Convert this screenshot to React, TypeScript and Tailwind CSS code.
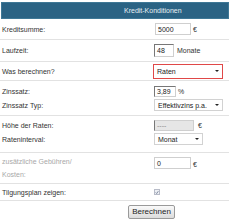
import React from "react";

function Field({
  w,
  value,
  bg = "bg-white text-[#222]",
  className = "",
}: {
  w: string;
  value: string;
  bg?: string;
  className?: string;
}) {
  return (
    <div className={`${w} ${bg} flex items-center border border-[#cfcfcf] pl-[2px] ${className}`}>
      {value}
    </div>
  );
}

function Select({ w, h, value, red = false }: { w: string; h: string; value: string; red?: boolean }) {
  return (
    <div
      className={`${w} ${h} flex items-center justify-between bg-white pl-[3px] pr-[3px] text-[#222] border ${
        red ? "border-[#e04848]" : "border-[#d2d2d2]"
      }`}
    >
      <span>{value}</span>
      <span className="h-0 w-0 border-l-[2px] border-r-[2px] border-t-[2px] border-l-transparent border-r-transparent border-t-[#222]" />
    </div>
  );
}

export default function App() {
  return (
    <div className="h-[220px] w-[229px] overflow-hidden bg-white text-[7px] leading-none text-[#333] [font-family:'Liberation_Sans',Arial,sans-serif]">
      {/* header */}
      <div className="ml-[1px] mt-[2px] flex h-[17px] items-center border border-[#3f7896] bg-[#2b6384] pl-[122px] text-[#e6eef3]">
        Kredit-Konditionen
      </div>

      <div className="flex h-[21px] items-center border-b border-[#e2e2e2]">
        <div className="w-[155px] pl-[2px]">Kreditsumme:</div>
        <Field w="w-[36px] h-[12px]" value="5000" />
        <span className="ml-[2px]">€</span>
      </div>

      <div className="flex h-[22px] items-center border-b border-[#e2e2e2]">
        <div className="w-[154px] pl-[2px]">Laufzeit:</div>
        <Field w="w-[20px] h-[13px]" value="48" className="border-l-[#777] border-t-[#777]" />
        <span className="ml-[3px]">Monate</span>
      </div>

      <div className="flex h-[19px] items-center border-b border-[#e2e2e2]">
        <div className="w-[153px] pl-[2px]">Was berechnen?</div>
        <Select w="w-[70px]" h="h-[15px]" value="Raten" red />
      </div>

      <div className="flex h-[35px] flex-col border-b border-[#e2e2e2] pt-[3px]">
        <div className="flex h-[14px] items-center">
          <div className="w-[154px] pl-[2px]">Zinssatz:</div>
          <Field w="w-[22px] h-[11px]" value="3,89" className="border-l-[#777] border-t-[#777]" />
          <span className="ml-[2px]">%</span>
        </div>
        <div className="flex h-[14px] items-center">
          <div className="w-[154px] pl-[2px]">Zinssatz Typ:</div>
          <Select w="w-[69px]" h="h-[12px]" value="Effektivzins p.a." />
        </div>
      </div>

      <div className="flex h-[37px] flex-col border-b border-[#e2e2e2] pt-[3px]">
        <div className="flex h-[13px] items-center">
          <div className="w-[154px] pl-[2px]">Höhe der Raten:</div>
          <Field
            w="w-[40px] h-[11px]"
            value="----"
            bg="bg-[#e6e6e6] text-[#8a8a8a]"
            className="border-l-[#777]"
          />
          <span className="ml-[4px]">€</span>
        </div>
        <div className="flex h-[14px] items-center">
          <div className="w-[154px] pl-[2px]">Rateninterval:</div>
          <Select w="w-[49px]" h="h-[12px]" value="Monat" />
        </div>
      </div>

      <div className="flex h-[31px] items-start border-b border-[#e2e2e2] pt-[2px]">
        <div className="w-[154px] pl-[2px] leading-[13px] text-[#a8a8a8]">
          zusätzliche Gebühren/
          <br />
          Kosten:
        </div>
        <Field w="w-[37px] h-[12px] mt-[2px]" value="0" />
        <span className="ml-[2px] mt-[6px]">€</span>
      </div>

      <div className="flex h-[17px] items-center border-b border-[#e2e2e2]">
        <div className="w-[154px] pl-[2px]">Tilgungsplan zeigen:</div>
        <div className="flex h-[6px] w-[6px] items-center justify-center border border-[#b8bcc8] bg-[#eef0f4]">
          <svg viewBox="0 0 6 6" className="h-[5px] w-[5px]">
            <path d="M1 3 L2.5 4.5 L5 1" fill="none" stroke="#4a5a7a" strokeWidth="1" />
          </svg>
        </div>
      </div>

      <div className="pl-[128px] pt-[4px]">
        <button className="flex h-[14px] w-[47px] items-center justify-center rounded-[2px] border border-[#9a9a9a] bg-gradient-to-b from-[#fafafa] to-[#dcdcdc] text-[8px] text-[#222]">
          Berechnen
        </button>
      </div>
    </div>
  );
}
